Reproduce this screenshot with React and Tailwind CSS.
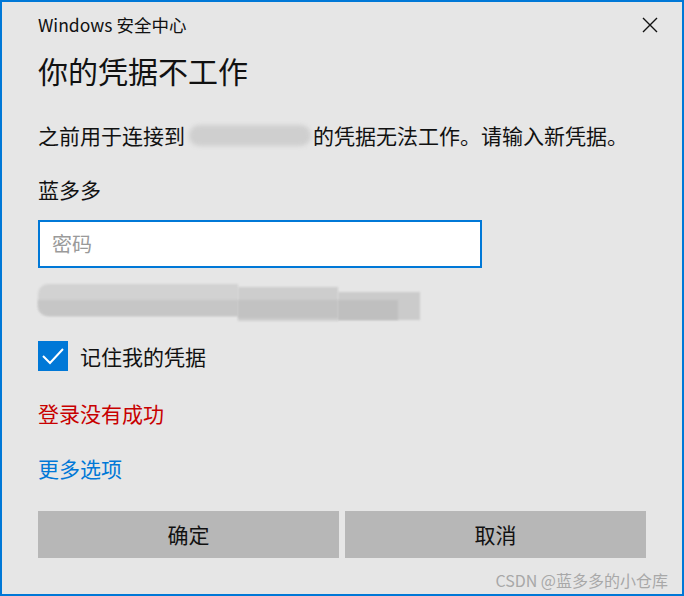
export default function App() {
  const cjk = { fontFamily: '"Noto Sans CJK SC", "Noto Sans", sans-serif' };
  return (
    <div className="relative w-[684px] h-[596px] border-2 border-[#0078d7] bg-[#e6e6e6] text-black" style={cjk}>
      <div className="flex items-center justify-between h-[46px] pl-[36px] pr-[24px]">
        <span className="text-[17.5px] leading-none text-[#111]">Windows 安全中心</span>
        <svg width="16" height="16" viewBox="0 0 16 16">
          <path d="M1 1 L15 15 M15 1 L1 15" stroke="#111" strokeWidth="1.4" fill="none" />
        </svg>
      </div>
      <div className="flex items-center h-[44px] pl-[36px]">
        <span className="text-[30px] leading-none text-[#111]">你的凭据不工作</span>
      </div>
      <div className="flex items-center h-[30px] mt-[28px] pl-[36px] text-[21px] leading-none text-[#111]">
        <span>之前用于连接到</span>
        <span className="relative inline-block w-[128px] h-[26px]">
          <span className="absolute left-[4px] right-[2px] top-[3px] bottom-[2px] rounded-full bg-[#cfcfcf] blur-[2px]" />
        </span>
        <span>的凭据无法工作。请输入新凭据。</span>
      </div>
      <div className="flex items-center h-[30px] mt-[24px] pl-[36px] text-[21px] leading-none text-[#111]">
        蓝多多
      </div>
      <div className="ml-[36px] mt-[16px] w-[444px] h-[48px] border-2 border-[#0078d7] bg-white flex items-center pl-[12px]">
        <span className="text-[20px] leading-none text-[#9a9a9a]">密码</span>
      </div>
      <div className="ml-[36px] mt-[14px] h-[38px] w-[382px] relative">
        <div className="absolute left-0 top-[2px] w-[200px] h-[32px] rounded-l-[10px] bg-[#d2d2d2] blur-[1px]" />
        <div className="absolute left-0 top-[18px] w-[200px] h-[16px] rounded-bl-[10px] bg-[#c6c6c6] blur-[1px]" />
        <div className="absolute left-[200px] top-[5px] w-[100px] h-[34px] bg-[#cdcdcd] blur-[1px]" />
        <div className="absolute left-[200px] top-[18px] w-[100px] h-[18px] bg-[#c2c2c2] blur-[1px]" />
        <div className="absolute left-[300px] top-[10px] w-[82px] h-[28px] bg-[#cbcbcb] blur-[1px]" />
        <div className="absolute left-[300px] top-[18px] w-[60px] h-[20px] bg-[#bfbfbf] blur-[1px]" />
      </div>
      <div className="flex items-center h-[30px] mt-[21px] pl-[36px]">
        <div className="w-[30px] h-[30px] bg-[#0078d7] flex items-center justify-center">
          <svg width="24" height="18" viewBox="0 0 24 18">
            <path d="M2 9 L9 16 L22 2" stroke="white" strokeWidth="2" fill="none" />
          </svg>
        </div>
        <span className="ml-[12px] text-[21px] leading-none text-[#111]">记住我的凭据</span>
      </div>
      <div className="flex items-center h-[30px] mt-[27px] pl-[36px] text-[21px] leading-none text-[#c80000]">
        登录没有成功
      </div>
      <div className="flex items-center h-[30px] mt-[25px] pl-[36px] text-[21px] leading-none text-[#0078d7]">
        更多选项
      </div>
      <div className="flex gap-[6px] mt-[28px] pl-[36px]">
        <div className="w-[301px] h-[47px] bg-[#b7b7b7] flex items-center justify-center text-[21px] leading-none text-[#111]">确定</div>
        <div className="w-[301px] h-[47px] bg-[#b7b7b7] flex items-center justify-center text-[21px] leading-none text-[#111]">取消</div>
      </div>
      <div className="absolute right-[14px] bottom-[6px] text-[16px] leading-none text-[#a8a8a8]">CSDN @蓝多多的小仓库</div>
    </div>
  );
}
